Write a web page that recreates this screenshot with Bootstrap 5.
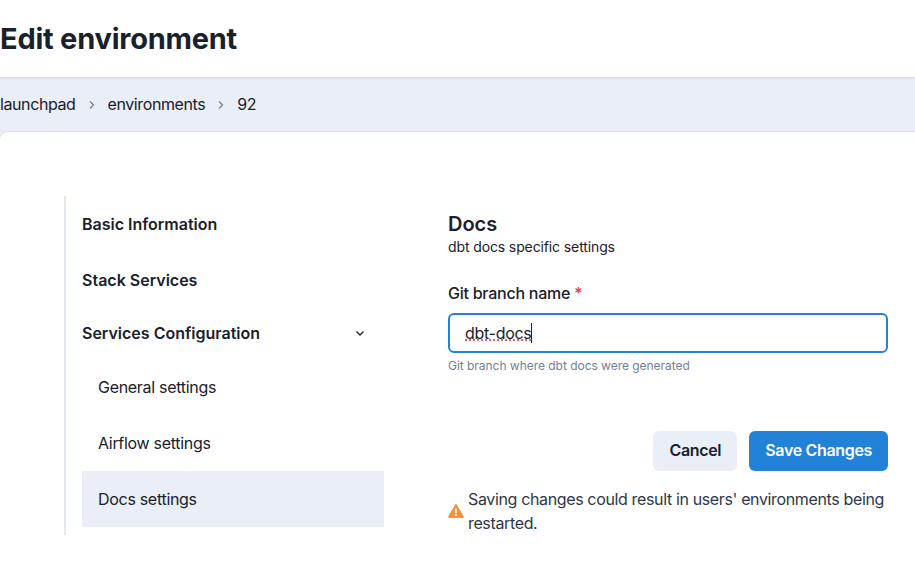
<!DOCTYPE html>
<html lang="en"><head><meta charset="utf-8">
<link href="https://cdn.jsdelivr.net/npm/bootstrap@5.3.0/dist/css/bootstrap.min.css" rel="stylesheet">
<style>
html,body{height:566px;overflow:hidden}
body{font-family:Inter,"Liberation Sans",sans-serif;color:#1a202c;background:#fff}
.head-bar{height:77px;box-shadow:0 1px 3px rgba(0,0,0,.1);position:relative;z-index:1}
.head-title{font-size:29px;font-weight:700;line-height:36px;margin:0;padding-top:21px;letter-spacing:-.23px}
.tint-wrap{background:#e9eef7}
.crumb-bar{height:55px;font-size:16px;line-height:24px;padding-top:15px;letter-spacing:-.4px}
.crumb-sep{width:32px;height:25px}
.sheet{background:#fff;border-radius:8px 0 0 0;height:434px;padding:64px 27px 0 64px;box-shadow:0 -1px 2px rgba(0,0,0,.06)}
.side-nav{width:320px;height:339px;border-left:2px solid #e2e8f0;padding-left:16px}
.side-main{height:56px;font-weight:600;font-size:16px}
.side-open{height:51px;padding-right:19px;padding-bottom:2px}
.side-sub{height:56px;padding-left:16px;font-size:16px;letter-spacing:-.3px}
.side-active{background:#e9eef7}
.form-pane{width:440px;margin-left:64px}
.pane-title{font-size:20px;font-weight:600;line-height:24px;margin:0;padding-top:16px}
.pane-sub{font-size:14px;line-height:20px;letter-spacing:-.12px;margin-top:1px}
.lbl{font-weight:500;font-size:16px;line-height:24px;margin:24px 0 8px;letter-spacing:-.25px}
.req{color:#e53e3e}
.inp{height:40px;border:2px solid #2182d8;border-radius:6px;padding:0 15px;font-size:16px;letter-spacing:-.3px;color:#1a202c;text-decoration:underline dotted #e53e3e}
.inp:focus{border-color:#2182d8;box-shadow:none}
.caret-mark{position:absolute;left:83px;top:10px;width:1px;height:20px;background:#1a202c}
.hint{font-size:12px;color:#718096;line-height:16px;margin-top:5px;letter-spacing:-.03px}
.act-row{margin-top:57px;gap:12px}
.act{height:40px;font-weight:600;font-size:16px;border:0;border-radius:6px;padding:0 16px 2px;letter-spacing:-.33px}
.act-c{background:#e9eef7;color:#1a202c}
.act-s{background:#2182d8;color:#fff}
.warn{font-size:16px;line-height:24px;color:#2d3748;letter-spacing:-.36px}
</style></head><body>
<div class="head-bar"><h1 class="head-title">Edit environment</h1></div>
<div class="tint-wrap">
<div class="crumb-bar d-flex"><span>launchpad</span><span class="crumb-sep d-flex align-items-center justify-content-center"><svg width="8" height="10" viewBox="0 0 8 10" fill="none" stroke="#718096" stroke-width="1.2"><path d="M2 1.5 5.5 5 2 8.5"/></svg></span><span>environments</span><span class="crumb-sep d-flex align-items-center justify-content-center"><svg width="8" height="10" viewBox="0 0 8 10" fill="none" stroke="#718096" stroke-width="1.2"><path d="M2 1.5 5.5 5 2 8.5"/></svg></span><span>92</span></div>
<div class="sheet d-flex">
<nav class="side-nav flex-shrink-0">
<div class="side-main d-flex align-items-center">Basic Information</div>
<div class="side-main d-flex align-items-center">Stack Services</div>
<div class="side-main side-open d-flex align-items-center justify-content-between">Services Configuration
<svg width="10" height="10" viewBox="0 0 10 10" fill="none" stroke="#1a202c" stroke-width="1.3"><path d="M1.5 3.5 5 7l3.5-3.5"/></svg></div>
<div class="side-sub d-flex align-items-center">General settings</div>
<div class="side-sub d-flex align-items-center">Airflow settings</div>
<div class="side-sub side-active d-flex align-items-center">Docs settings</div>
</nav>
<section class="form-pane">
<h2 class="pane-title">Docs</h2>
<div class="pane-sub">dbt docs specific settings</div>
<div class="lbl">Git branch name <span class="req">*</span></div>
<div class="position-relative"><input class="form-control inp" value="dbt-docs"><span class="caret-mark"></span></div>
<div class="hint">Git branch where dbt docs were generated</div>
<div class="d-flex justify-content-end act-row"><button class="act act-c">Cancel</button><button class="act act-s">Save Changes</button></div>
<div class="d-flex align-items-center gap-1 mt-3 warn">
<svg width="16" height="16" viewBox="0 0 16 16" class="flex-shrink-0"><path d="M8 2 14.8 14H1.2Z" fill="#f6913d" stroke="#f6913d" stroke-width="2" stroke-linejoin="round"/><path d="M8 5.5v4.7M8 11.6v1.6" stroke="#fff" stroke-width="1.6"/></svg>
<span>Saving changes could result in users' environments being restarted.</span></div>
</section>
</div>
</div>
<script src="https://cdn.jsdelivr.net/npm/bootstrap@5.3.0/dist/js/bootstrap.bundle.min.js"></script>
</body></html>
